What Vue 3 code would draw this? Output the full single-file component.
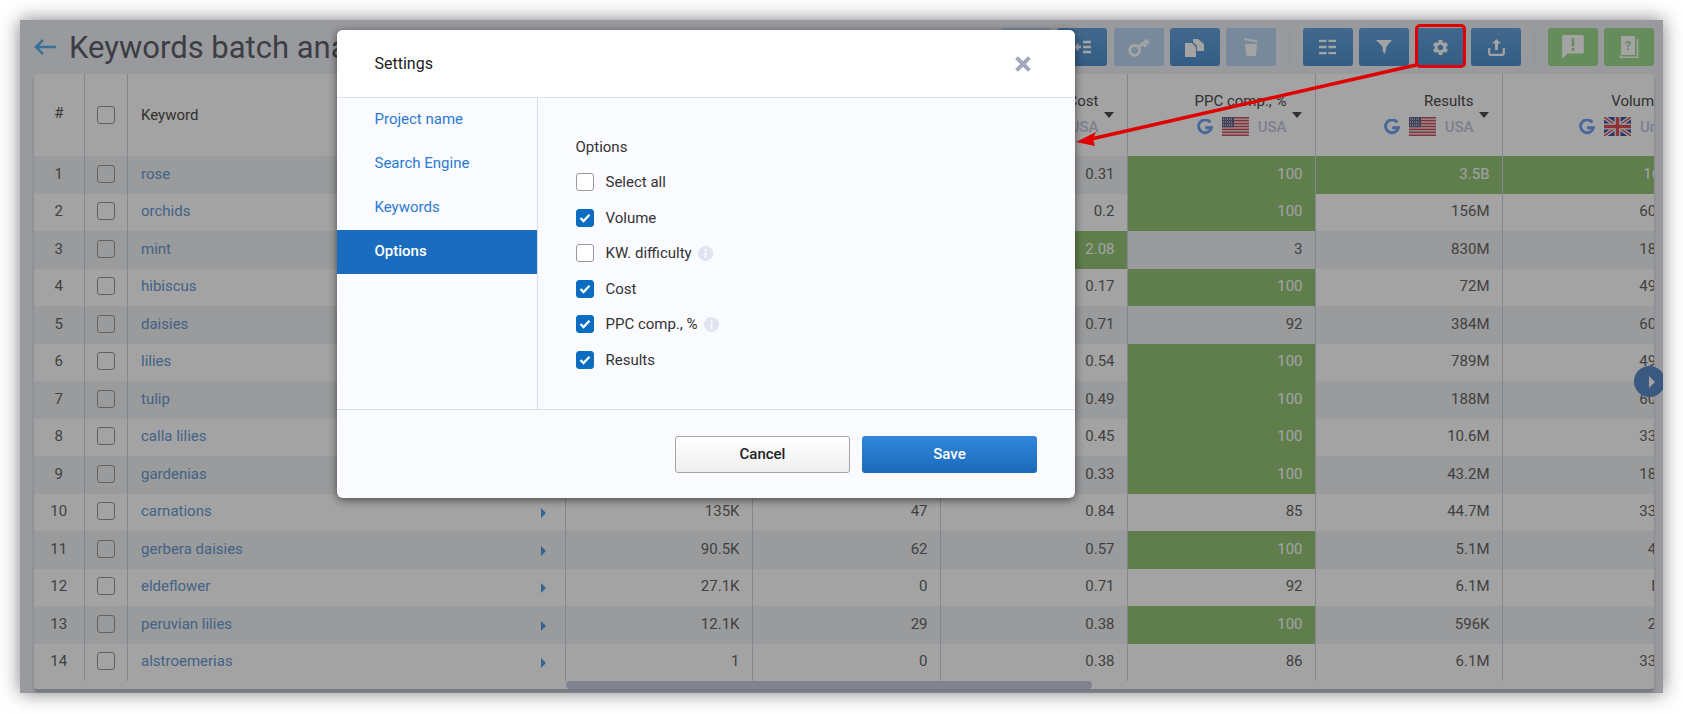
<script setup>
const headCols = [
  { key: 'vol', name: 'Volume', cls: 'c3', flag: 'us', region: 'USA' },
  { key: 'kd', name: 'KW. difficulty', cls: 'c4', flag: 'us', region: 'USA' },
  { key: 'cost', name: 'Cost', cls: 'c5', flag: 'us', region: 'USA' },
  { key: 'ppc', name: 'PPC comp., %', cls: 'c6', flag: 'us', region: 'USA' },
  { key: 'res', name: 'Results', cls: 'c7', flag: 'us', region: 'USA' },
  { key: 'uk', name: 'Volume', cls: 'c8', flag: 'uk', region: 'United Kingdom', last: true }
]
const rows = [
  ['rose', '', '', '0.31', '100', '3.5B', '165K'],
  ['orchids', '', '', '0.2', '100', '156M', '60.5K'],
  ['mint', '', '', '2.08', '3', '830M', '18.1K'],
  ['hibiscus', '', '', '0.17', '100', '72M', '49.5K'],
  ['daisies', '', '', '0.71', '92', '384M', '60.5K'],
  ['lilies', '', '', '0.54', '100', '789M', '49.5K'],
  ['tulip', '', '', '0.49', '100', '188M', '60.5K'],
  ['calla lilies', '', '', '0.45', '100', '10.6M', '33.1K'],
  ['gardenias', '', '', '0.33', '100', '43.2M', '18.1K'],
  ['carnations', '135K', '47', '0.84', '85', '44.7M', '33.1K'],
  ['gerbera daisies', '90.5K', '62', '0.57', '100', '5.1M', '4.4K'],
  ['eldeflower', '27.1K', '0', '0.71', '92', '6.1M', 'N/A'],
  ['peruvian lilies', '12.1K', '29', '0.38', '100', '596K', '2.9K'],
  ['alstroemerias', '1', '0', '0.38', '86', '6.1M', '33.1K']
]
const bodyCols = ['c3', 'c4', 'c5', 'c6', 'c7', 'c8']
function isGreen(r, c) {
  const v = rows[r][c + 1]
  if (c === 3) return v === '100'
  if (c === 2) return r === 2
  if (c === 4 || c === 5) return r === 0
  return false
}
const menu = ['Project name', 'Search Engine', 'Keywords', 'Options']
const options = [
  { label: 'Select all', on: false },
  { label: 'Volume', on: true },
  { label: 'KW. difficulty', on: false, info: true },
  { label: 'Cost', on: true },
  { label: 'PPC comp., %', on: true, info: true },
  { label: 'Results', on: true }
]
const stripes = [0, 2, 4, 6, 8, 10, 12]
</script>

<template>
  <div class="page">
    <div class="window">
      <header class="topbar">
        <div class="title-wrap">
          <svg class="back" width="24" height="18" viewBox="0 0 24 18"><path d="M23 9H3M10 2 3 9l7 7" fill="none" stroke="currentColor" stroke-width="2.6"/></svg>
          <h1 class="title">Keywords batch analysis</h1>
        </div>
        <div class="tools">
          <button class="tool dis"></button>
          <button class="tool">
            <svg width="18" height="16" viewBox="0 0 18 16"><path d="M1 8h7M4.500 4.500v7M10 3h8M10 8h8M10 13h8" stroke="#fff" stroke-width="2.400" fill="none"/></svg>
          </button>
          <button class="tool dis">
            <svg width="24" height="22" viewBox="0 0 22 20"><circle cx="7" cy="13" r="4.500" fill="none" stroke="#fff" stroke-width="2.800"/><path d="M10.500 10 19 3.500M15 7l2.500 2.500M18 4.500 20 7" stroke="#fff" stroke-width="2.800" fill="none"/></svg>
          </button>
          <button class="tool">
            <svg width="20" height="19" viewBox="0 0 20 19"><path d="M0 5h7l4 4v10H0zM8 1h5l6 5v7h-7V8L8 4z" fill="#fff"/></svg>
          </button>
          <button class="tool dis">
            <svg width="16" height="20" viewBox="0 0 16 20"><path d="M1.500 1 14.500 3.500l-.4 2L1.100 3zM2 7h12l-1 11a1.500 1.500 0 0 1-1.500 1h-7A1.500 1.500 0 0 1 3 18z" fill="#fff"/></svg>
          </button>
          <span class="sep"></span>
          <button class="tool">
            <svg width="17" height="16" viewBox="0 0 18 16"><path d="M0 1.500h8M10 1.500h8M0 8h8M10 8h8M0 14.500h8M10 14.500h8" stroke="#fff" stroke-width="2.400" fill="none"/></svg>
          </button>
          <button class="tool">
            <svg width="16" height="16" viewBox="0 0 16 16"><path d="M0 1h16l-5.500 6.500L9 15l-2-2-.5-5.500z" fill="#fff"/></svg>
          </button>
          <button class="tool">
            <svg width="19" height="19" viewBox="0 0 24 24"><path fill="#fff" fill-rule="evenodd" d="M19.140 12.940c.04-.3.06-.61.06-.94 0-.32-.02-.64-.07-.94l2.030-1.580c.18-.14.23-.41.12-.61l-1.920-3.320c-.12-.22-.37-.29-.59-.22l-2.390.96c-.5-.38-1.030-.7-1.620-.94l-.36-2.540c-.04-.24-.24-.41-.48-.41h-3.840c-.24 0-.43.17-.47.41l-.36 2.540c-.59.24-1.130.57-1.620.94l-2.390-.96c-.22-.08-.47 0-.59.22L2.740 8.870c-.12.21-.08.47.12.61l2.030 1.580c-.05.3-.09.63-.09.94s.02.64.07.94l-2.030 1.580c-.18.14-.23.41-.12.61l1.920 3.320c.12.22.37.29.59.22l2.390-.96c.5.38 1.030.7 1.620.94l.36 2.540c.05.24.24.41.48.41h3.840c.24 0 .44-.17.47-.41l.36-2.540c.59-.24 1.130-.56 1.620-.94l2.390.96c.22.08.47 0 .59-.22l1.920-3.320c.12-.22.07-.47-.12-.61l-2.010-1.580zM12 15.600c-1.980 0-3.600-1.620-3.600-3.600s1.620-3.600 3.600-3.600 3.600 1.620 3.600 3.600-1.620 3.600-3.600 3.600z"/></svg>
          </button>
          <button class="tool">
            <svg width="17" height="18" viewBox="0 0 17 18"><path d="M8.500 1 4 5.500h3V12h3V5.500h3z" fill="#fff"/><path d="M1.200 10v5.300a1.500 1.500 0 0 0 1.500 1.500h11.600a1.500 1.500 0 0 0 1.500-1.500V10" fill="none" stroke="#fff" stroke-width="2.200"/></svg>
          </button>
          <span class="sep"></span>
          <button class="tool green">
            <svg width="26" height="26" viewBox="0 0 24 24"><path d="M2 2.500A1.500 1.500 0 0 1 3.500 1h17A1.500 1.500 0 0 1 22 2.500v14a1.500 1.500 0 0 1-1.500 1.500H7l-5 5z" fill="#fff"/><path d="M10.800 4h2.400v7.500h-2.400zM10.800 13h2.400v2.400h-2.400z" fill="#a0dc90"/></svg>
          </button>
          <button class="tool green">
            <svg width="20" height="24" viewBox="0 0 20 24"><path d="M2 1h13a1 1 0 0 1 1 1v18H2z" fill="#fff"/><path d="M1.500 20.200v2h17V4" fill="none" stroke="#fff" stroke-width="1.600"/><text x="9" y="15" class="book-q">?</text></svg>
          </button>
        </div>
      </header>

      <section class="card">
        <div class="row head">
          <div class="cell c0 center hash">#</div>
          <div class="cell c1 center"><span class="box"></span></div>
          <div class="cell c2 kw-head">Keyword</div>
          <div v-for="col in headCols" :key="col.key" class="cell hcell" :class="col.cls">
            <div class="hname">{{ col.name }}</div>
            <div class="hsub" :class="{ lastsub: col.last }">
              <svg class="g" width="16" height="16" viewBox="0 0 16 16"><path d="M13.300 3.400A6.500 6.500 0 1 0 14.400 8.800H8.200" fill="none" stroke="#70a0f0" stroke-width="2.900"/></svg>
              <svg v-if="col.flag === 'us'" class="flag" width="27" height="19" viewBox="0 0 27 19">
                <rect width="27" height="19" fill="#f3dde0"/>
                <rect v-for="s in stripes" :key="s" :y="s * 1.46" width="27" height="1.460" fill="#c9505e"/>
                <rect width="12" height="10.200" fill="#66668e"/>
                <path d="M1 2h10M1 5h10M1 8h10" stroke="#fff" stroke-width="1" stroke-dasharray="1 1"/>
              </svg>
              <svg v-else class="flag" width="27" height="19" viewBox="0 0 27 19">
                <rect width="27" height="19" fill="#3a56a8"/>
                <path d="M0 0l27 19M27 0 0 19" stroke="#fff" stroke-width="4"/>
                <path d="M0 0l27 19M27 0 0 19" stroke="#d8505a" stroke-width="1.500"/>
                <path d="M13.500 0v19M0 9.500h27" stroke="#fff" stroke-width="6"/>
                <path d="M13.500 0v19M0 9.500h27" stroke="#d8505a" stroke-width="3.500"/>
              </svg>
              <span class="region">{{ col.region }}</span>
            </div>
            <i class="tri"></i>
          </div>
        </div>
        <div v-for="(r, i) in rows" :key="r[0]" class="row data" :class="{ odd: i % 2 === 0 }">
          <div class="cell c0 center">{{ i + 1 }}</div>
          <div class="cell c1 center"><span class="box"></span></div>
          <div class="cell c2 kw"><a class="link">{{ r[0] }}</a><i class="go"></i></div>
          <div v-for="(c, j) in bodyCols" :key="c" class="cell num" :class="[c, { good: isGreen(i, j) }]">{{ r[j + 1] }}</div>
        </div>
        <div class="track"><span class="thumb"></span></div>
      </section>

      <button class="more" aria-label="Scroll right"><i></i></button>

      <div class="overlay"></div>

      <span class="red-box"></span>
      <svg class="arrow" width="360" height="90" viewBox="0 0 360 90">
        <path d="M345 6 20 80" stroke="#e00000" stroke-width="3.500" fill="none"/>
        <path d="M5 83 25 73l-3 7 2 7z" fill="#e00000"/>
      </svg>

      <div class="modal" role="dialog">
        <div class="m-head">
          <span class="m-title">Settings</span>
          <svg class="m-close" width="16" height="16" viewBox="0 0 15 15"><path d="M1.500 1.500l12 12M13.500 1.500l-12 12" stroke="#a4a8bd" stroke-width="3.800"/></svg>
        </div>
        <div class="m-body">
          <nav class="m-nav">
            <a v-for="m in menu" :key="m" class="m-item" :class="{ active: m === 'Options' }">{{ m }}</a>
          </nav>
          <div class="m-panel">
            <div class="m-label">Options</div>
            <label v-for="o in options" :key="o.label" class="opt">
              <span class="cb" :class="{ on: o.on }">
                <svg v-if="o.on" width="12" height="10" viewBox="0 0 12 10"><path d="M1.500 5 4.500 8 10.500 1.800" stroke="#fff" stroke-width="2.300" fill="none"/></svg>
              </span>
              <span class="opt-text">{{ o.label }}</span>
              <svg v-if="o.info" class="info" width="15" height="15" viewBox="0 0 15 15"><circle cx="7.500" cy="7.500" r="7.500" fill="#dfe4f0"/><path d="M6.500 3h2v2h-2zM6.500 6.200h2V12h-2z" fill="#fafbff"/></svg>
            </label>
          </div>
        </div>
        <div class="m-foot">
          <button class="btn cancel">Cancel</button>
          <button class="btn save">Save</button>
        </div>
      </div>
    </div>
  </div>
</template>

<style>
html, body { margin: 0; background: #fff; }
</style>

<style scoped>
* { box-sizing: border-box; }
.page { width: 1683px; height: 714px; padding: 20px; font-family: Roboto, "Liberation Sans", sans-serif; overflow: hidden; }
.window { position: relative; width: 1643px; height: 673px; padding: 8px 9px 4px 13px; background: #eff1f7; box-shadow: 0 0 18px rgba(0, 0, 0, .5); overflow: hidden; }

.topbar { display: flex; justify-content: space-between; align-items: center; height: 38px; margin-bottom: 8px; }
.title-wrap { display: flex; align-items: center; gap: 12px; }
.back { color: #5db0f0; }
.title { margin: 0; font-size: 31px; font-weight: 400; color: #5f6269; white-space: nowrap; }
.tools { display: flex; align-items: center; gap: 6.25px; }
.tool { display: flex; align-items: center; justify-content: center; width: 50px; height: 38px; padding: 0; border: 0; border-radius: 3px; background: linear-gradient(#68a4dc, #5092d0); }
.tool.dis { background: #bcd6f4; }
.tool.green { background: #a0dc90; }
.sep { width: 1px; height: 38px; margin: 0 6.5px; background: #e2e4e8; }
.book-q { font: 700 12px Roboto, sans-serif; fill: #a0dc90; text-anchor: middle; }

.card { height: 615px; margin-left: 1px; background: #fff; border-radius: 3px; overflow: hidden; box-shadow: 0 4px 3px rgba(60, 70, 110, .3); }
.row { display: flex; height: 37.5px; width: 1700px; font-size: 15px; color: #666; }
.row.odd { background: #f1f2f5; }
.row.head { height: 82px; }
.cell { position: relative; flex: none; height: 100%; border-right: 1px solid #cfd3e0; display: flex; align-items: center; }
.data .cell { padding-bottom: 2px; }
.c0 { width: 50.5px; }
.c1 { width: 43px; }
.c2 { width: 438.5px; }
.c3 { width: 186.5px; }
.c4 { width: 188px; }
.c5 { width: 187px; }
.c6 { width: 188px; }
.c7 { width: 187px; }
.c8 { width: 187.5px; border-right: 0; }
.center { justify-content: center; }
.hash { color: #555; padding-bottom: 4px; }
.kw-head { padding-left: 13.5px; color: #4d4d4d; }
.box { display: block; width: 18px; height: 18px; border: 1px solid #999; border-radius: 3px; }
.kw { padding-left: 13.5px; padding-right: 19px; justify-content: space-between; }
.link { color: #6a9ad0; }
.go { width: 0; height: 0; border-left: 5px solid #5a9adc; border-top: 5px solid transparent; border-bottom: 5px solid transparent; margin-top: 4px; }
.num { justify-content: flex-end; padding-right: 12px; }
.num.good { background: #96c578; color: #fff; }

.hcell { display: block; padding: 19px 28px 0 0; text-align: right; }
.hname { color: #4d4d4d; line-height: 17px; white-space: nowrap; }
.hsub { display: flex; justify-content: flex-end; align-items: center; gap: 9px; height: 19px; margin-top: 7px; white-space: nowrap; }
.lastsub { justify-content: flex-start; padding-left: 76.5px; }
.g { flex: none; }
.flag { flex: none; }
.region { color: #c4c9e0; font-weight: 500; }
.tri { position: absolute; right: 13px; top: 38px; width: 0; height: 0; border-top: 6px solid #4d4d4d; border-left: 5px solid transparent; border-right: 5px solid transparent; }

.track { height: 8px; padding-left: 531.5px; }
.thumb { display: block; width: 526px; height: 8px; border-radius: 4px; background: #c8cede; }

.more { position: absolute; left: 1614px; top: 346px; width: 31px; height: 31px; padding: 0; border: 0; border-radius: 50%; background: #5a8cc8; display: flex; align-items: center; justify-content: center; }
.more i { width: 0; height: 0; margin-left: 4px; border-left: 6px solid #fff; border-top: 6px solid transparent; border-bottom: 6px solid transparent; }

.overlay { position: absolute; inset: 0; background: rgba(0, 0, 0, .36); }
.red-box { position: absolute; left: 1395px; top: 4px; width: 51px; height: 44px; border: 3px solid #e00000; border-radius: 5px; }
.arrow { position: absolute; left: 1051px; top: 39px; }

.modal { position: absolute; left: 316.5px; top: 10px; width: 738.5px; height: 468px; display: flex; flex-direction: column; background: #fafbff; border-radius: 6px; box-shadow: 0 2px 8px rgba(0, 0, 0, .55); overflow: hidden; font-size: 15px; color: #333; }
.m-head { flex: none; height: 68px; padding: 0 41px 1px 38px; display: flex; align-items: center; justify-content: space-between; background: #fff; border-bottom: 1px solid #dfe3ee; }
.m-title { font-size: 16px; color: #222; }
.m-close { margin-top: 2px; margin-right: 3px; }
.m-body { flex: 1; display: flex; min-height: 0; }
.m-nav { flex: none; width: 201px; display: flex; flex-direction: column; border-right: 1px solid #d5dbec; }
.m-item { height: 44px; padding-left: 38px; padding-bottom: 2px; display: flex; align-items: center; color: #2b7ad0; }
.m-item.active { background: #1a6dbe; color: #fff; font-weight: 500; }
.m-panel { flex: 1; padding: 39px 0 0 38px; }
.m-label { height: 20px; line-height: 20px; margin-bottom: 7.5px; }
.opt { display: flex; align-items: center; height: 35.5px; }
.cb { flex: none; width: 18px; height: 18px; border: 1px solid #999; border-radius: 3px; background: #fff; display: flex; align-items: center; justify-content: center; }
.cb.on { background: #0a6dc2; border-color: #0a6dc2; }
.opt-text { margin-left: 12px; }
.info { margin-left: 6px; margin-top: 1px; }
.m-foot { flex: none; height: 89px; padding: 26px 38px 0 0; display: flex; justify-content: flex-end; gap: 12px; border-top: 1px solid #d9dde8; }
.btn { width: 175px; height: 37px; padding: 0 0 2px; border-radius: 3px; font: 500 15px Roboto, sans-serif; }
.cancel { background: linear-gradient(#fff, #efefef); border: 1px solid #a5a5a5; color: #222; }
.save { background: linear-gradient(#3187da, #1b6abb); border: 0; color: #fff; }
</style>
